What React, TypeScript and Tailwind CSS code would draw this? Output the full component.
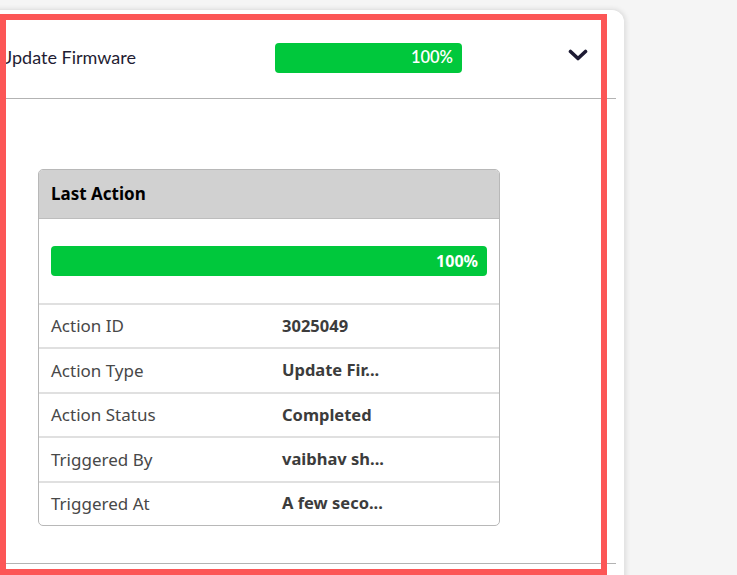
import React from "react";

const ubuntu = { fontFamily: '"Noto Sans", "Open Sans", sans-serif' };
const lato = { fontFamily: 'Lato, "Noto Sans", sans-serif' };

const rows: [string, string][] = [
  ["Action ID", "3025049"],
  ["Action Type", "Update Fir..."],
  ["Action Status", "Completed"],
  ["Triggered By", "vaibhav sh..."],
  ["Triggered At", "A few seco..."],
];

export default function App() {
  return (
    <div className="relative w-[737px] h-[575px] overflow-hidden bg-[#f5f5f5]">
      <div className="ml-[-22px] mt-[9px] w-[647px] h-[600px] bg-white rounded-tr-[13px] border-t border-r border-[#e4e4e4] shadow-[1px_0_5px_rgba(0,0,0,0.10)]">
        <div className="mr-[8px]">
          {/* header */}
          <div className="h-[89px] pt-[7px] flex items-center border-b border-[#b3b3b3]" style={lato}>
            <div className="pl-[21px] w-[297px] text-[18px] text-[#1f1d33] whitespace-nowrap">Update Firmware</div>
            <div className="w-[187px] h-[30px] rounded-[4px] bg-[#00c83c] flex items-center justify-end pr-[9px] text-white text-[16.5px] font-semibold">
              100%
            </div>
            <div className="ml-[106px] mt-[-4px]">
              <svg width="20" height="13" viewBox="0 0 20 13">
                <polyline points="2.5,2.5 10,9.5 17.5,2.5" fill="none" stroke="#1d1b33" strokeWidth="3.6" strokeLinecap="round" strokeLinejoin="round" />
              </svg>
            </div>
          </div>
          {/* body */}
          <div className="h-[465px] border-b border-[#b3b3b3] pt-[70px] pl-[60px]">
            <div className="w-[462px] border border-[#b8b8b8] rounded-[5px] overflow-hidden" style={ubuntu}>
              <div className="h-[49px] bg-[#d1d1d1] border-b border-[#bdbdbd] flex items-center pl-[12px] text-[17px] font-bold text-black">
                Last Action
              </div>
              <div className="h-[84px] px-[12px] flex items-center">
                <div className="w-full h-[30px] rounded-[4px] bg-[#00c83c] flex items-center justify-end pr-[9px] text-white text-[16px] font-bold">
                  100%
                </div>
              </div>
              {rows.map(([k, v]) => (
                <div key={k} className="h-[44.4px] border-t-2 border-[#e0e0e0] grid grid-cols-2 items-center text-[#484848]">
                  <div className="pl-[12px] text-[17px]">{k}</div>
                  <div className="pl-[13px] text-[16.5px] font-bold text-[#3c3c3c]">{v}</div>
                </div>
              ))}
            </div>
          </div>
        </div>
      </div>
      <div className="absolute left-0 top-[14px] w-[607px] h-[561px] border-[6px] border-[#fc5656] pointer-events-none" />
    </div>
  );
}
